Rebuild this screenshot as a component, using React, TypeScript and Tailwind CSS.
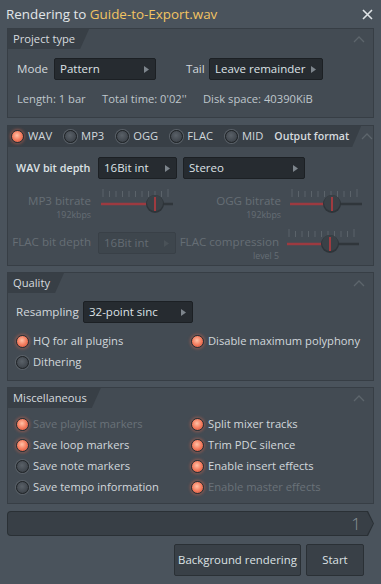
import React from "react";

function Radio({ on }: { on: boolean }) {
  if (on) {
    return (
      <span className="inline-block shrink-0 w-[13px] h-[13px] rounded-full border border-[#2b2f33] bg-[radial-gradient(circle_at_45%_40%,#ffc1a6_0%,#f47d5f_50%,#c84a35_100%)] shadow-[0_0_3px_1px_rgba(232,106,80,0.45)]" />
    );
  }
  return (
    <span className="inline-block shrink-0 w-[13px] h-[13px] rounded-full border border-[#202427] bg-[radial-gradient(circle_at_45%_40%,#5a6168_0%,#434950_60%,#31363b_100%)] shadow-[0_0_0_1px_#5a6168]" />
  );
}

function Arrow({ dim }: { dim?: boolean }) {
  return (
    <svg width="5" height="7" viewBox="0 0 5 7" className="shrink-0">
      <path d="M0 0 L5 3.5 L0 7 Z" fill={dim ? "#4a5258" : "#7d858c"} />
    </svg>
  );
}

function Dropdown({
  text,
  className,
  dim,
}: {
  text: string;
  className: string;
  dim?: boolean;
}) {
  return (
    <div
      className={`h-[22px] shrink-0 flex items-center justify-between pl-[5px] pr-[6px] rounded-[2px] border ${
        dim
          ? "bg-[#3e464d] border-[#394047] text-[#646c73]"
          : "bg-[#262b30] border-[#1c2024] text-[#dde2e6]"
      } ${className}`}
    >
      <span className="text-[11.5px] whitespace-nowrap">{text}</span>
      <Arrow dim={dim} />
    </div>
  );
}

function Slider({ knob }: { knob: number }) {
  const ticks = [];
  for (let i = 0; i <= 10; i++) ticks.push(4 + i * 6.5);
  return (
    <svg width="76" height="30" viewBox="0 0 76 30" className="shrink-0">
      {ticks.map((x, i) => (
        <line
          key={i}
          x1={x}
          x2={x}
          y1={i === 0 || i === 10 ? 2 : 4}
          y2="10"
          stroke="#5b636a"
          strokeWidth="1"
        />
      ))}
      <line x1="2" x2={knob} y1="17" y2="17" stroke="#9d3a40" strokeWidth="2.5" />
      <line x1={knob} x2="74" y1="17" y2="17" stroke="#30363b" strokeWidth="2.5" />
      <circle cx={knob} cy="17" r="9" fill="#2e3439" />
      <circle cx={knob} cy="16" r="8" fill="#3a4147" />
      <line x1={knob} x2={knob} y1="10" y2="24" stroke="#c23a3e" strokeWidth="1.5" />
    </svg>
  );
}

function Chevron() {
  return (
    <svg width="12" height="7" viewBox="0 0 12 7" className="mr-[8px] shrink-0">
      <path d="M1 6 L6 1 L11 6" fill="none" stroke="#5d656c" strokeWidth="1.3" />
    </svg>
  );
}

function Tab({ children }: { children: React.ReactNode }) {
  return (
    <div className="h-[20px] flex items-center justify-between">
      <div className="h-full flex items-center pl-[5px] pr-[14px] bg-[#383f46] [clip-path:polygon(0_0,100%_0,calc(100%_-_9px)_100%,0_100%)]">
        {children}
      </div>
      <Chevron />
    </div>
  );
}

function Check({
  on,
  text,
  dim,
}: {
  on: boolean;
  text: string;
  dim?: boolean;
}) {
  return (
    <div className="flex items-center gap-[4px] h-[21px] whitespace-nowrap">
      <Radio on={on} />
      <span className={dim ? "text-[#6a7279]" : "text-[#d2d8dc]"}>{text}</span>
    </div>
  );
}

function Panel({ children, className }: { children: React.ReactNode; className: string }) {
  return (
    <div className={`mx-[7px] border border-[#373e45] bg-[#434b53] ${className}`}>
      {children}
    </div>
  );
}

export default function App() {
  const formats = [
    { name: "WAV", on: true },
    { name: "MP3", on: false },
    { name: "OGG", on: false },
    { name: "FLAC", on: false },
    { name: "MID", on: false },
  ];

  return (
    <div className="w-[381px] h-[584px] bg-[#4a535c] text-[#d2d8dc] text-[11.2px] font-['Open_Sans',sans-serif] overflow-hidden whitespace-nowrap">
      {/* title */}
      <div className="h-[28px] flex items-center justify-between pl-[6px] pr-[8px]">
        <div className="text-[13.4px] text-[#e2e6e9]">
          Rendering to <span className="text-[#f2c462]">Guide-to-Export.wav</span>
        </div>
        <svg width="11" height="11" viewBox="0 0 11 11">
          <path d="M1 1 L10 10 M10 1 L1 10" stroke="#e0e4e7" strokeWidth="1.6" />
        </svg>
      </div>

      {/* project type */}
      <Panel className="h-[90px]">
        <Tab>
          <span className="text-[11.2px] text-[#d6dbdf]">Project type</span>
        </Tab>
        <div className="flex items-center mt-[9px] pl-[9px]">
          <span className="w-[37px] text-[11.6px]">Mode</span>
          <Dropdown text="Pattern" className="w-[102px]" />
          <span className="ml-[30px] w-[23px] text-[11.6px]">Tail</span>
          <Dropdown text="Leave remainder" className="w-[114px]" />
        </div>
        <div className="flex items-center mt-[11px] pl-[9px] text-[#bfc6cb] text-[11.2px]">
          <span className="w-[85px]">Length: 1 bar</span>
          <span className="w-[101px]">Total time: 0'02''</span>
          <span>Disk space: 40390KiB</span>
        </div>
      </Panel>

      {/* output format */}
      <Panel className="h-[141px] mt-[7px]">
        <div className="h-[21px] flex items-center justify-between">
          <div className="h-full flex items-center pl-[3px] pr-[12px] bg-[#383f46] [clip-path:polygon(0_0,100%_0,calc(100%_-_9px)_100%,0_100%)]">
            {formats.map((f) => (
              <div key={f.name} className="flex items-center gap-[4px] mr-[12px]">
                <Radio on={f.on} />
                <span className="text-[11.2px] text-[#d2d8dc]">{f.name}</span>
              </div>
            ))}
            <span className="-ml-[1px] text-[10.6px] font-semibold text-[#d6dbdf]">Output format</span>
          </div>
          <Chevron />
        </div>
        <div className="flex items-center mt-[10px] pl-[8px]">
          <span className="w-[82px] text-[10.8px] font-semibold text-[#dde2e5]">WAV bit depth</span>
          <Dropdown text="16Bit int" className="w-[79px]" />
          <Dropdown text="Stereo" className="w-[122px] ml-[6px]" />
        </div>
        <div className="flex items-start mt-[8px] h-[40px]">
          <div className="w-[83px] shrink-0 text-right mt-[7px] text-[#666e75] leading-[14px]">
            <div className="text-[11.6px]">MP3 bitrate</div>
            <div className="text-[8.8px]">192kbps</div>
          </div>
          <div className="ml-[8px]">
            <Slider knob={56} />
          </div>
          <div className="w-[106px] shrink-0 text-right mt-[7px] text-[#666e75] leading-[14px]">
            <div className="text-[11.6px]">OGG bitrate</div>
            <div className="text-[8.8px]">192kbps</div>
          </div>
          <div className="ml-[7px]">
            <Slider knob={44} />
          </div>
        </div>
        <div className="flex items-start">
          <div className="w-[83px] shrink-0 text-right mt-[8px] leading-[14px] text-[11.6px] text-[#666e75]">FLAC bit depth</div>
          <Dropdown text="16Bit int" className="w-[78px] ml-[7px] mt-[5px]" dim />
          <div className="w-[103px] shrink-0 text-right mt-[8px] text-[#666e75] leading-[14px]">
            <div className="text-[11.6px]">FLAC compression</div>
            <div className="text-[8.8px]">level 5</div>
          </div>
          <div className="ml-[6px]">
            <Slider knob={45} />
          </div>
        </div>
      </Panel>

      {/* quality */}
      <Panel className="h-[109px] mt-[6px]">
        <Tab>
          <span className="text-[11.2px] text-[#d6dbdf]">Quality</span>
        </Tab>
        <div className="flex items-center mt-[8px] pl-[8px]">
          <span className="w-[67px] text-[11.6px]">Resampling</span>
          <Dropdown text="32-point sinc" className="w-[110px]" />
        </div>
        <div className="grid grid-cols-[175px_1fr] mt-[8px] pl-[8px]">
          <Check on text="HQ for all plugins" />
          <Check on text="Disable maximum polyphony" />
          <Check on={false} text="Dithering" />
        </div>
      </Panel>

      {/* misc */}
      <Panel className="h-[117px] mt-[6px]">
        <Tab>
          <span className="text-[11.2px] text-[#d6dbdf]">Miscellaneous</span>
        </Tab>
        <div className="grid grid-cols-[175px_1fr] mt-[6px] pl-[8px]">
          <Check on dim text="Save playlist markers" />
          <Check on text="Split mixer tracks" />
          <Check on text="Save loop markers" />
          <Check on text="Trim PDC silence" />
          <Check on={false} text="Save note markers" />
          <Check on text="Enable insert effects" />
          <Check on={false} text="Save tempo information" />
          <Check on dim text="Enable master effects" />
        </div>
      </Panel>

      {/* progress */}
      <div className="mx-[7px] mt-[7px] h-[25px] bg-[#2a3035] [clip-path:polygon(0_0,calc(100%_-_6px)_0,100%_50%,calc(100%_-_6px)_100%,0_100%)] rounded-l-[4px] p-[1px]">
        <div className="w-full h-full bg-[#383f46] rounded-l-[3px] [clip-path:polygon(0_0,calc(100%_-_6px)_0,100%_50%,calc(100%_-_6px)_100%,0_100%)] flex items-center justify-end pr-[12px]">
          <span className="text-[17px] font-light text-[#8b939a]">1</span>
        </div>
      </div>

      {/* buttons */}
      <div className="flex justify-end gap-[5px] mt-[8px] pr-[17px]">
        <button className="w-[127px] h-[32px] bg-[#394047] border border-[#2a3035] rounded-[2px] text-[11.4px] text-[#dde2e5]">
          Background rendering
        </button>
        <button className="w-[58px] h-[32px] bg-[#394047] border border-[#2a3035] rounded-[2px] text-[11.4px] text-[#dde2e5]">
          Start
        </button>
      </div>
    </div>
  );
}
